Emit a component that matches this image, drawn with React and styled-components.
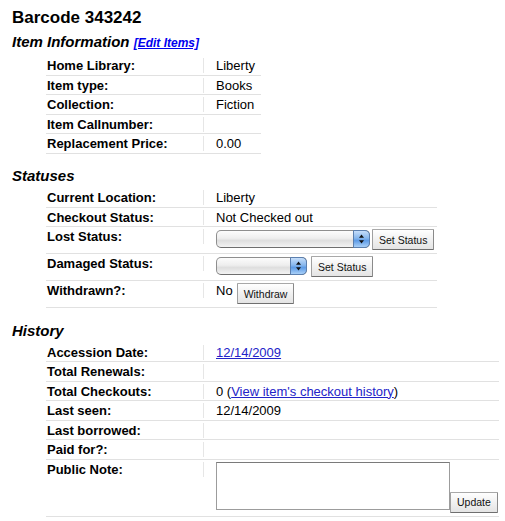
import React from 'react';
import styled, { createGlobalStyle } from 'styled-components';

const GlobalStyle = createGlobalStyle`
  body {
    margin: 0;
    background: #fff;
    color: #000;
    font-family: "Liberation Sans", Arial, sans-serif;
  }
`;

const Page = styled.div`
  padding: 8px 0 0 12px;
`;

const Title = styled.h1`
  margin: 0;
  font-size: 17px;
  line-height: 19.5px;
  font-weight: bold;
`;

const Section = styled.section`
  margin-top: 13.5px;

  &:first-of-type {
    margin-top: 5.5px;
  }
`;

const Heading = styled.h2`
  margin: 0 0 4px;
  font-size: 15px;
  line-height: 17px;
  font-weight: bold;
  font-style: italic;
`;

const Link = styled.a`
  color: #2323c8;
  text-decoration: underline;
  cursor: pointer;
`;

const EditLink = styled(Link)`
  color: #0000ee;
  font-size: 12px;
`;

const Table = styled.div`
  margin-left: 34px;
  width: ${(p) => p.$width}px;
`;

const Row = styled.div`
  display: flex;
  align-items: flex-start;
  padding: 2px 0 ${(p) => (p.$tall ? 3 : 1.5)}px;
  border-bottom: 1px solid #e1e1e1;
  font-size: 13px;
  line-height: 15px;
`;

const Label = styled.div`
  flex: none;
  width: 158px;
  box-sizing: border-box;
  padding-left: 1px;
  border-right: 1px solid #e6e6e6;
  font-weight: bold;
  min-height: 15px;
`;

const Value = styled.div`
  display: flex;
  align-items: ${(p) => p.$align || 'flex-start'};
  gap: ${(p) => p.$gap || 0}px;
  padding-left: 12px;
  white-space: nowrap;
`;

const SelectWrap = styled.span`
  position: relative;
  display: inline-block;
  flex: none;
  width: ${(p) => p.$width}px;
  height: 18px;
  margin-top: 0.5px;
`;

const SelectBox = styled.select`
  appearance: none;
  display: block;
  width: 100%;
  height: 100%;
  box-sizing: border-box;
  margin: 0;
  padding: 0;
  border: 1px solid #8e8e8e;
  border-bottom-color: #6e6e6e;
  border-radius: 5px;
  background: linear-gradient(#fcfcfc, #eeeeee 45%, #dedede 60%, #f3f3f3);
`;

const Arrows = styled.span`
  position: absolute;
  top: 0;
  right: 0;
  bottom: 0;
  width: 17px;
  box-sizing: border-box;
  border: 1px solid #5b7fae;
  border-radius: 0 5px 5px 0;
  background: linear-gradient(#c6defa, #86b6ec 45%, #5d9be6 60%, #a9d0f8);
  display: flex;
  align-items: center;
  justify-content: center;
`;

const Button = styled.button`
  flex: none;
  height: 21px;
  box-sizing: border-box;
  margin: 0;
  padding: 0 6px;
  font-family: "Liberation Sans", Arial, sans-serif;
  font-size: 10.5px;
  color: #111;
  border: 1px solid #a0a0a0;
  border-color: #a8a8a8 #8a8a8a #6f6f6f #a0a0a0;
  border-radius: 1px;
  background: linear-gradient(#ffffff, #f1f1f1 50%, #e4e4e4);
`;

const NoteArea = styled.textarea`
  flex: none;
  width: 234px;
  height: 48px;
  box-sizing: border-box;
  margin: 0 0 3.3px;
  padding: 2px;
  border: 1px solid #9c9c9c;
  border-top-color: #7a7a7a;
  resize: none;
`;

const Select = ({ width }) => (
  <SelectWrap $width={width}>
    <SelectBox aria-label="status" />
    <Arrows>
      <svg width="7" height="10" viewBox="0 0 7 10">
        <path d="M3.5 0.5 L6 3.8 L1 3.8 Z" fill="#111" />
        <path d="M3.5 9.5 L6 6.2 L1 6.2 Z" fill="#111" />
      </svg>
    </Arrows>
  </SelectWrap>
);

const itemInfo = [
  ['Home Library:', 'Liberty'],
  ['Item type:', 'Books'],
  ['Collection:', 'Fiction'],
  ['Item Callnumber:', ''],
  ['Replacement Price:', '0.00'],
];

const App = () => (
  <Page>
    <GlobalStyle />
    <Title>Barcode 343242</Title>

    <Section>
      <Heading>
        Item Information <EditLink>[Edit Items]</EditLink>
      </Heading>
      <Table $width={215}>
        {itemInfo.map(([label, value]) => (
          <Row key={label}>
            <Label>{label}</Label>
            <Value>{value}</Value>
          </Row>
        ))}
      </Table>
    </Section>

    <Section>
      <Heading>Statuses</Heading>
      <Table $width={391}>
        <Row>
          <Label>Current Location:</Label>
          <Value>Liberty</Value>
        </Row>
        <Row>
          <Label>Checkout Status:</Label>
          <Value>Not Checked out</Value>
        </Row>
        <Row $tall>
          <Label>Lost Status:</Label>
          <Value $gap={2}>
            <Select width={154} />
            <Button>Set Status</Button>
          </Value>
        </Row>
        <Row $tall>
          <Label>Damaged Status:</Label>
          <Value $gap={4}>
            <Select width={91} />
            <Button>Set Status</Button>
          </Value>
        </Row>
        <Row $tall>
          <Label>Withdrawn?:</Label>
          <Value $gap={4}>
            <span>No</span>
            <Button>Withdraw</Button>
          </Value>
        </Row>
      </Table>
    </Section>

    <Section>
      <Heading>History</Heading>
      <Table $width={453}>
        <Row>
          <Label>Accession Date:</Label>
          <Value>
            <Link>12/14/2009</Link>
          </Value>
        </Row>
        <Row>
          <Label>Total Renewals:</Label>
          <Value />
        </Row>
        <Row>
          <Label>Total Checkouts:</Label>
          <Value>
            <span>
              0 (<Link>View item's checkout history</Link>)
            </span>
          </Value>
        </Row>
        <Row>
          <Label>Last seen:</Label>
          <Value>12/14/2009</Value>
        </Row>
        <Row>
          <Label>Last borrowed:</Label>
          <Value />
        </Row>
        <Row>
          <Label>Paid for?:</Label>
          <Value />
        </Row>
        <Row $tall>
          <Label>Public Note:</Label>
          <Value $align="flex-end">
            <NoteArea />
            <Button>Update</Button>
          </Value>
        </Row>
      </Table>
    </Section>
  </Page>
);

export default App;
